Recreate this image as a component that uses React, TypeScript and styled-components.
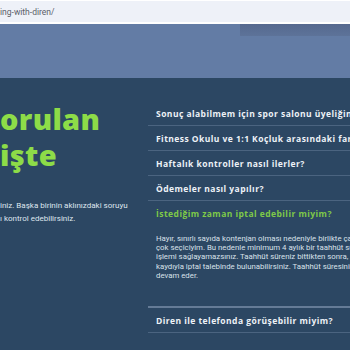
import React from 'react';
import styled, { createGlobalStyle } from 'styled-components';

const Global = createGlobalStyle`
  html, body {
    margin: 0;
    padding: 0;
    overflow: hidden;
    background: #2c4763;
  }
  * { box-sizing: border-box; }
`;

const Page = styled.div`
  width: 350px;
  height: 350px;
  display: flex;
  flex-direction: column;
  overflow: hidden;
  font-family: Roboto, 'Liberation Sans', sans-serif;
`;

const AddressBar = styled.div`
  height: 24px;
  flex: none;
  background: #eef1f8;
  border-top: 1px solid #ffffff;
  border-bottom: 2px solid #ffffff;
  display: flex;
  align-items: center;
`;

const Url = styled.span`
  font-size: 8.5px;
  color: #5b6068;
  white-space: nowrap;
`;

const Banner = styled.div`
  height: 54px;
  flex: none;
  background: #637ca5;
  display: flex;
  justify-content: flex-end;
  align-items: flex-start;
`;

const BannerShade = styled.div`
  width: 110px;
  height: 12px;
  background: linear-gradient(180deg, #56698f 0%, #5d7399 100%);
`;

const Main = styled.main`
  flex: 1;
  background: #2c4763;
  display: flex;
  gap: 8px;
`;

const Intro = styled.section`
  width: 140px;
  flex: none;
  padding-top: 23px;
  display: flex;
  flex-direction: column;
`;

const Heading = styled.h2`
  margin: 0;
  font-family: 'Open Sans', 'DejaVu Sans', sans-serif;
  font-weight: 800;
  font-size: 29px;
  line-height: 36px;
  letter-spacing: 0.3px;
  color: #8ddc48;
  white-space: nowrap;
`;

const Lead = styled.p`
  margin: 26px 0 0;
  font-size: 8px;
  line-height: 13px;
  color: #dfe6ee;
  white-space: nowrap;
`;

const Faq = styled.section`
  flex: 1;
  min-width: 0;
  padding-top: 23px;
  display: flex;
  flex-direction: column;
`;

const Item = styled.div<{ $open?: boolean }>`
  border-bottom: ${(p) => (p.$open ? '2px solid #657b96' : '1px solid #4b6480')};
`;

const Question = styled.div<{ $open?: boolean }>`
  height: 24px;
  display: flex;
  align-items: center;
  padding-left: 8px;
  font-family: 'Open Sans', 'DejaVu Sans', sans-serif;
  font-weight: 700;
  font-size: 8.5px;
  letter-spacing: 0.45px;
  color: ${(p) => (p.$open ? '#7fca48' : '#eef2f7')};
  white-space: nowrap;
`;

const Answer = styled.div`
  padding: 9px 0 26px 8px;
  font-size: 7.8px;
  line-height: 9.2px;
  color: #d9e1ea;
  white-space: nowrap;
`;

const questions = [
  'Sonuç alabilmem için spor salonu üyeliğine ihtiyacım var mı?',
  'Fitness Okulu ve 1:1 Koçluk arasındaki fark nedir?',
  'Haftalık kontroller nasıl ilerler?',
  'Ödemeler nasıl yapılır?',
];

const answer = [
  'Hayır, sınırlı sayıda kontenjan olması nedeniyle birlikte çalışacağım kişileri',
  'çok seçiciyim. Bu nedenle minimum 4 aylık bir taahhüt süresi vardır ve iptal',
  'işlemi sağlayamazsınız. Taahhüt süreniz bittikten sonra, bir ay önceden haber',
  'kaydıyla iptal talebinde bulunabilirsiniz. Taahhüt süresinin sonunda üyeliğiniz',
  'devam eder.',
];

export default function App() {
  return (
    <Page>
      <Global />
      <AddressBar>
        <Url>ing-with-diren/</Url>
      </AddressBar>
      <Banner>
        <BannerShade />
      </Banner>
      <Main>
        <Intro>
          <Heading>
            orulan
            <br />
            işte
          </Heading>
          <Lead>
            iniz. Başka birinin aklınızdaki soruyu
            <br />ı kontrol edebilirsiniz.
          </Lead>
        </Intro>
        <Faq>
          {questions.map((q) => (
            <Item key={q}>
              <Question>{q}</Question>
            </Item>
          ))}
          <Item $open>
            <Question $open>İstediğim zaman iptal edebilir miyim?</Question>
            <Answer>
              {answer.map((line) => (
                <div key={line}>{line}</div>
              ))}
            </Answer>
          </Item>
          <Item>
            <Question>Diren ile telefonda görüşebilir miyim?</Question>
          </Item>
        </Faq>
      </Main>
    </Page>
  );
}
